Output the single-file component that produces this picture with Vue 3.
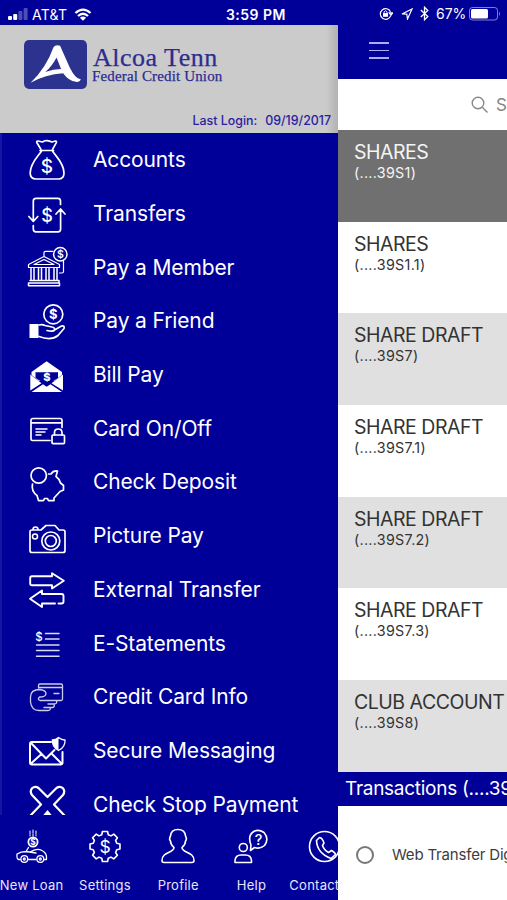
<script setup>
const dollar = (x, y, size, weight = 400, fill = '#fff') =>
  `<text x="${x}" y="${y}" font-size="${size}" font-weight="${weight}" fill="${fill}" stroke="none" text-anchor="middle">$</text>`

const menu = [
  {
    label: 'Accounts',
    icon: `<path d="M17 14.5 12.8 7.5Q12.300 5.900 14 6L18.500 7Q20.500 5.300 23 5.600T28 7L31.500 6Q33 6 32.200 7.800L28.500 14.500M16 15.500H29.500M17.500 16C14.500 21 6.200 28 6.200 38Q6.200 44 12 44H34.500Q40 44 40 38C40 28 31.500 21 28.500 16"/>${dollar(23, 37.5, 19, 500)}`,
  },
  {
    label: 'Transfers',
    icon: `<path d="M36.500 15.500V12Q36.500 9.300 33.800 9.300H12Q9.300 9.300 9.300 12V31.500M4.800 27.500 9.300 32.300 13.800 27.500M9.300 36.500V40Q9.300 42.800 12 42.800H34Q36.600 42.800 36.600 40V20M32 25 36.600 20 41 25"/>${dollar(23, 32.500, 18, 500)}`,
  },
  {
    label: 'Pay a Member',
    icon: `<g stroke-width="1.200"><path d="M4.500 22.500 20 14.500 35.500 22.500V25.500H4.500ZM10 22.500 20 17.500 30 22.500ZM20 14V10.500Q20 9.300 21.500 9.300H29M39.500 18.500V29.500Q39.500 31 38 31H35.500"/><path d="M7 26.500V38M10 26.500V38M14.500 26.500V38M17.500 26.500V38M22 26.500V38M25 26.500V38M30 26.500V38M33 26.500V38M6 38.500H35V41H4.500V43.800H35.500V41" stroke-width="1.500"/><circle cx="36.300" cy="12.300" r="6.700" stroke-width="1.500"/></g>${dollar(36.300, 16, 10.500, 600)}`,
  },
  {
    label: 'Pay a Friend',
    icon: `<circle cx="29.300" cy="18.300" r="9.500"/><rect x="5.500" y="28" width="9" height="14" fill="#fff" stroke="none"/><path d="M15 29Q18 28 21 29.500L28 31Q31 31.500 30.500 34Q29.500 36 23 34.500M30.500 34 37.500 30Q41 29.500 40 32.500L34 39.500Q27 45 15 40.500"/>${dollar(29.300, 23, 13, 700)}`,
  },
  {
    label: 'Bill Pay',
    icon: `<path d="M7.500 22 22.600 11.200 38 22V25L30 31H15L7.500 25Z" fill="#fff" stroke="none"/><path d="M11.500 22.200H34V28L23 35 11.500 28Z" fill="#000099" stroke="none"/><path d="M6.300 24.500 17.500 33.200 6.300 40.500ZM39 24.500 27.500 33.200 39 40.500ZM7.500 42 19 34.300 22.600 36.800 26.500 34.300 38 42Z" fill="#fff" stroke="none"/>${dollar(22.800, 31, 11, 800)}`,
  },
  {
    label: 'Card On/Off',
    icon: `<path d="M26 37.500H8.500Q7 37.500 7 36V17.500Q7 15.500 9 15.500H36Q38 15.500 38 17.500V24.500M7 19.800H38"/><path d="M12 26H23M12 29H21M12 32H17" stroke-width="1.500"/><rect x="28" y="32" width="12.500" height="8.600" rx="1"/><path d="M30.500 32V29.500Q30.500 26 34.200 26T38 29.500V32"/>`,
  },
  {
    label: 'Check Deposit',
    icon: `<circle cx="14.700" cy="18.500" r="7.700"/><path d="M24.500 17H27Q29 13.500 33.500 14L32 19.500Q35.500 22 36.500 26L39.500 28.500V33L36 34.500 30 41V43.600H24.500L23.500 41.500H20.500L19.500 43.600H14.500L13 38.500Q7 34 8.500 27"/>`,
  },
  {
    label: 'Picture Pay',
    icon: `<path d="M17 19 22 14.500H31L35 19H39Q41 19 41 21V39.500Q41 41.500 39 41.500H8Q6 41.500 6 39.500V21Q6 19 8 19Z"/><circle cx="26.800" cy="30" r="9"/><circle cx="26.800" cy="30" r="5.500"/><circle cx="11" cy="25.500" r="2.500" stroke-width="1.500"/><path d="M9 18.500Q9 16 11.500 16T14 18.500"/>`,
  },
  {
    label: 'External Transfer',
    icon: `<path d="M28 12.300H8Q6.200 12.300 6.200 14V19.500Q6.200 21.300 8 21.300H28V24.500L39.800 16.800 28 9.200ZM31 39.500H18V43L6 34.700 18 26.500V30H37.500Q39.500 30 39.500 32V37.500Q39.500 39.500 37.500 39.500H34.500" stroke-width="1.900"/>`,
  },
  {
    label: 'E-Statements',
    icon: `<path d="M21.500 15.500H35M21.500 21H35M12.500 27H35M12.500 32.500H35M12.500 38.200H35" stroke-width="1.500" opacity=".85"/>${dollar(15, 23, 11.500, 500)}`,
  },
  {
    label: 'Credit Card Info',
    icon: `<g stroke-width="1.300" opacity=".8"><path d="M14.500 16V13.500Q14.500 12 16 12H37Q38.500 12 38.500 13.500V27Q38.500 28.500 37 28.500H16Q13 27.500 15.500 25Q22 25 22 21.500Q22 18.500 16 17.500Q6.500 17.500 6.500 25V30Q7.500 38.500 15 38.500H24Q27 38.500 26 35.500H20M25 35.500H28.500Q31 35 30 32H24M30 32Q33.500 32 32.500 28.500M15 15.500H38.500M30 21.500H35"/></g>`,
  },
  {
    label: 'Secure Messaging',
    icon: `<path d="M27 17H8Q6 17 6 19V37.500Q6 39.500 8 39.500H36.500Q38.500 39.500 38.500 37.500V27M7 18 22 33.500 30.500 25M7 38.500 17.500 29M37.500 38.500 28 29" stroke-width="2"/><path d="M28.300 15Q32 15 34.500 12.500Q37.500 15 41 15Q41.500 22 34.600 25.500Q28 22 28.300 15Z" stroke-width="1.300"/><path d="M28.300 15Q32 15 34.500 12.500V25.500Q28 22 28.300 15Z" fill="#fff" stroke="none"/>`,
  },
  {
    label: 'Check Stop Payment',
    icon: `<path d="M23.500 18 14.500 9Q11 6.500 8 9.300Q5.500 12.500 8 16L17 25.500 6.500 36.500M23.500 18 32.500 9Q36 6.500 39 9.300Q41.500 12.500 39 16L30 25.500 40.500 36.500" stroke-width="2.200"/><path d="M23.500 31 18.500 37H28.500Z" fill="#fff" stroke="none"/>`,
  },
]

const gearPath = (() => {
  const points = []
  for (let i = 0; i < 8; i++) {
    const c = (i * Math.PI) / 4 - Math.PI / 2
    for (const [off, r] of [[-0.27, 12.2], [-0.17, 15.2], [0.17, 15.2], [0.27, 12.2]]) {
      points.push(`${(24 + r * Math.cos(c + off)).toFixed(2)} ${(24.500 + r * Math.sin(c + off)).toFixed(2)}`)
    }
  }
  return `M${points.join('L')}Z`
})()

const tabs = [
  {
    label: 'New Loan',
    icon: `<g stroke-width="1.300"><path d="M12 37.500H10.500Q8.500 37 9 32Q13 29.500 18 29.500L20.500 25.500M22 30Q29 25.500 34 28.500Q38.500 31 38.500 35V37.500H36M20.500 37.500H28M18 29.500 28 31"/><circle cx="16.300" cy="37" r="3.400"/><circle cx="32.300" cy="37" r="3.400"/><circle cx="16.300" cy="37" r="1"/><circle cx="32.300" cy="37" r="1"/><path d="M22 9V14M25 8V14M28 9V14" stroke-width="1" stroke-dasharray="3 1"/><circle cx="25" cy="20" r="4.600" stroke-width="1.800"/></g>${dollar(25, 23, 8.500, 700)}`,
  },
  { label: 'Settings', icon: `<path d="${gearPath}"/>${dollar(24, 30.700, 17.500)}` },
  {
    label: 'Profile',
    icon: `<path d="M20 25.500Q16.500 22.500 16.500 19C14.500 17 16 15.500 16.500 14Q17 7.500 24 7.500T31.500 14C32 15.500 33.500 17 31.500 19Q31.500 22.500 28 25.500C28 31 40 29.500 40 38.500Q40 40.500 38 40.500H10Q8 40.500 8 38.500C8 29.500 20 31 20 25.500Z"/>`,
  },
  {
    label: 'Help',
    icon: `<circle cx="15.300" cy="25.500" r="4"/><path d="M7 40.500V38.500Q7.500 33 13 33H17.500Q23 33 23.500 38.500V40.500Z"/><path d="M22.500 28.500 23 23Q19.500 14 25 10Q30 6.500 36 10.500Q41.500 17 36.500 23.500Q32 27.500 26.500 25.500Z"/><text x="30.500" y="22.500" font-size="14.500" font-weight="500" fill="#fff" stroke="none" text-anchor="middle">?</text>`,
  },
  {
    label: 'Contact Us',
    icon: `<circle cx="23.500" cy="24.500" r="15"/><path d="M18.500 15.500 15.500 18.500Q16 31 30 36.500L34.500 32.500Q34.500 31 30.500 28.500L27.500 30.500Q23 28 21.500 23.500L23 21Q21.500 16 18.500 15.500Z"/>`,
  },
]

const accounts = [
  { name: 'SHARES', id: '(....39S1)', active: true },
  { name: 'SHARES', id: '(....39S1.1)' },
  { name: 'SHARE DRAFT', id: '(....39S7)' },
  { name: 'SHARE DRAFT', id: '(....39S7.1)' },
  { name: 'SHARE DRAFT', id: '(....39S7.2)' },
  { name: 'SHARE DRAFT', id: '(....39S7.3)' },
  { name: 'CLUB ACCOUNT', id: '(....39S8)' },
]
</script>

<template>
  <div class="phone">
    <aside class="drawer">
      <div class="status">
        <svg class="signal" viewBox="0 0 20 12">
          <rect x="0" y="8" width="4" height="4" rx="1" />
          <rect x="5.200" y="6" width="4" height="6" rx="1" />
          <rect x="10.400" y="3" width="4" height="9" rx="1" opacity=".3" />
          <rect x="15.600" y="0" width="4" height="12" rx="1" opacity=".3" />
        </svg>
        <span class="carrier">AT&amp;T</span>
        <svg class="wifi" viewBox="0 0 18 13">
          <path d="M1.500 5Q9-1.800 16.500 5M4 8Q9 3.600 14 8" fill="none" stroke="#fff" stroke-width="2.300" />
          <path d="M9 12.700 5.900 9.700Q9 7.200 12.100 9.700Z" fill="#fff" />
        </svg>
        <span class="time">3:59 PM</span>
      </div>
      <header class="brand">
        <div class="logo-row">
          <svg class="logo" viewBox="0 0 62 48">
            <rect width="62" height="48" rx="5" fill="#2b338f" />
            <path d="M6.500 42Q22 27 29 7Q31 4 35.500 5.500L45 27Q51 39 56 38.500Q55 42 51 41Q44 40 38.500 32.500Q21 33.500 6.500 42ZM21 31.500Q29 28.500 36.500 28.500L32 17Q28 25 21 31.500Z" fill="#fff" />
          </svg>
          <div class="brand-text">
            <div class="brand-name">Alcoa Tenn</div>
            <div class="brand-sub">Federal Credit Union</div>
          </div>
        </div>
        <div class="login"><span>Last Login:</span><span>09/19/2017</span></div>
      </header>
      <nav class="menu">
        <div v-for="item in menu" :key="item.label" class="menu-item">
          <svg class="icon" viewBox="0 0 48 50" v-html="item.icon"></svg>
          <span class="menu-label">{{ item.label }}</span>
        </div>
      </nav>
      <div class="tabs">
        <div v-for="tab in tabs" :key="tab.label" class="tab">
          <svg class="icon tab-icon" viewBox="0 0 48 50" v-html="tab.icon"></svg>
          <span class="tab-label">{{ tab.label }}</span>
        </div>
      </div>
    </aside>

    <main class="main">
      <div class="topbar">
        <div class="status-right">
          <svg class="lock" viewBox="0 0 15 14">
            <path d="M12.300 4.500A5.700 5.700 0 1 0 12.500 9M11 5.800H14.600L12.800 8.300Z" fill="none" stroke="#fff" stroke-width="1.300" />
            <rect x="4.300" y="6" width="5.400" height="4" fill="#fff" />
            <path d="M5.400 6V4.600Q7 2.400 8.600 4.600V6" fill="none" stroke="#fff" />
          </svg>
          <svg class="arrow" viewBox="0 0 12 12"><path d="M1 6 11 1 6.500 11 5.800 6.200Z" fill="none" stroke="#fff" stroke-width="1.200" /></svg>
          <svg class="bluetooth" viewBox="0 0 9 15"><path d="M.8 4 7.800 10.500 4.500 13.800V1.200L7.800 4.500.8 11" fill="none" stroke="#fff" stroke-width="1.300" /></svg>
          <span class="percent">67%</span>
          <svg class="battery" viewBox="0 0 33 14">
            <rect x=".5" y=".5" width="28" height="12.500" rx="3" fill="none" stroke="#fff" opacity=".5" />
            <rect x="2" y="2" width="17" height="9.500" rx="1.500" fill="#fff" />
            <path d="M30 4.500Q32 6.800 30 9Z" fill="#fff" opacity=".5" />
          </svg>
        </div>
        <div class="burger"><i></i><i></i><i></i></div>
      </div>
      <div class="search">
        <svg viewBox="0 0 18 18"><circle cx="7" cy="7" r="5.800" /><path d="M11.300 11.300 16.500 16.500" /></svg>
        <span>Search</span>
      </div>
      <div class="accounts">
        <div v-for="a in accounts" :key="a.id" class="account" :class="{ active: a.active }">
          <div class="account-name">{{ a.name }}</div>
          <div class="account-id">{{ a.id }}</div>
        </div>
      </div>
      <div class="section">Transactions (....39S1)</div>
      <div class="transaction"><span class="radio"></span><span>Web Transfer Digital</span></div>
    </main>
  </div>
</template>

<style>
body { background: #fff; }
</style>

<style scoped>
.phone {
  display: flex;
  width: 507px;
  height: 900px;
  overflow: hidden;
  font-family: Inter, "Liberation Sans", sans-serif;
  white-space: nowrap;
}
.drawer {
  display: flex;
  flex-direction: column;
  flex: 0 0 338px;
  width: 338px;
  height: 900px;
  overflow: hidden;
  background: #000099;
  color: #fff;
}
.status {
  display: flex;
  align-items: center;
  box-sizing: border-box;
  flex: 0 0 25px;
  height: 25px;
  padding: 3px 0 0 8px;
  font-size: 13.500px;
}
.signal { width: 20px; height: 12px; fill: #fff; }
.carrier { width: 42px; padding-left: 4px; font-size: 14px; letter-spacing: 0.250px; }
.wifi { width: 18px; height: 13px; }
.time { margin-left: 134px; font-size: 14px; font-weight: 600; letter-spacing: 0.450px; }
.brand {
  display: flex;
  flex-direction: column;
  justify-content: space-between;
  box-sizing: border-box;
  flex: 0 0 108px;
  padding: 15px 7px 4px 24px;
  background: linear-gradient(90deg, #cbcbcb 0, #cbcbcb 326px, #b2b2b2 338px);
  color: #2c2c91;
}
.logo-row { display: flex; gap: 5px; }
.logo { width: 63px; height: 49px; }
.brand-text { padding-top: 5px; font-family: "Liberation Serif", serif; -webkit-text-stroke: 0.250px #2c2c91; }
.brand-name { padding-left: 1px; font-size: 26px; line-height: 25px; letter-spacing: 0.500px; }
.brand-sub { font-size: 15px; line-height: 13px; letter-spacing: 0.150px; }
.login {
  display: flex;
  justify-content: flex-end;
  gap: 8px;
  font-size: 12.400px;
  font-weight: 500;
  line-height: 16px;
  color: #2a1fa0;
}
.menu {
  box-sizing: border-box;
  flex: 0 0 682px;
  overflow: hidden;
  border-left: 2px solid #1515a5;
}
.menu-item {
  display: flex;
  align-items: center;
  height: 53.700px;
  padding-left: 22px;
}
.icon {
  flex: none;
  width: 48px;
  height: 50px;
  fill: none;
  stroke: #fff;
  stroke-width: 1.700;
  stroke-linejoin: round;
  stroke-linecap: round;
}
.menu-label { margin-left: 21px; font-size: 21px; letter-spacing: -0.130px; }
.tabs {
  display: flex;
  flex: 0 0 85px;
  margin-left: -5px;
}
.tab {
  display: flex;
  flex: 0 0 73.300px;
  flex-direction: column;
  align-items: center;
  padding-top: 7px;
}
.tab-icon { stroke-width: 1.600; }
.tab-label { margin-top: 5px; font-size: 13px; line-height: 16px; letter-spacing: 0.250px; color: #e6e6fa; }
.main { flex: 0 0 169px; width: 169px; overflow: hidden; background: #fff; }
.topbar { height: 79px; background: #000099; }
.status-right {
  display: flex;
  align-items: center;
  height: 27px;
  padding-left: 41px;
  color: #fff;
}
.lock { width: 14px; height: 14px; }
.arrow { width: 12px; height: 12px; margin-left: 8px; }
.bluetooth { width: 9px; height: 15px; margin-left: 7px; }
.percent { width: 33px; margin-left: 7px; font-size: 14px; }
.battery { width: 33px; height: 14px; }
.burger { display: flex; flex-direction: column; gap: 6px; padding: 15px 0 0 31px; }
.burger i { width: 20px; height: 1.500px; background: #aaaef5; }
.search {
  display: flex;
  align-items: center;
  gap: 7px;
  height: 51px;
  padding-left: 133px;
  color: #858585;
  font-size: 17px;
}
.search svg { flex: none; width: 18px; height: 18px; fill: none; stroke: #888; stroke-width: 1.400; }
.account {
  box-sizing: border-box;
  height: 91.700px;
  padding: 11px 0 0 16px;
  background: #fff;
  color: #333;
}
.account:nth-child(odd) { background: #e0e0e0; }
.account.active { background: #707070; color: #f5f5f5; }
.account-name { font-size: 19.500px; line-height: 23px; letter-spacing: -0.480px; }
.account-id { font-size: 14.300px; line-height: 17px; letter-spacing: 0.300px; }
.section {
  height: 34px;
  padding-left: 7px;
  background: #000099;
  color: #fff;
  font-size: 19px;
  line-height: 34px;
  letter-spacing: -0.280px;
}
.transaction {
  display: flex;
  align-items: center;
  gap: 18px;
  height: 98px;
  padding-left: 18px;
  color: #3c3c3c;
  font-size: 15px;
  letter-spacing: -0.180px;
}
.radio { flex: none; box-sizing: border-box; width: 18px; height: 18px; border: 2px solid #777; border-radius: 50%; }
</style>
